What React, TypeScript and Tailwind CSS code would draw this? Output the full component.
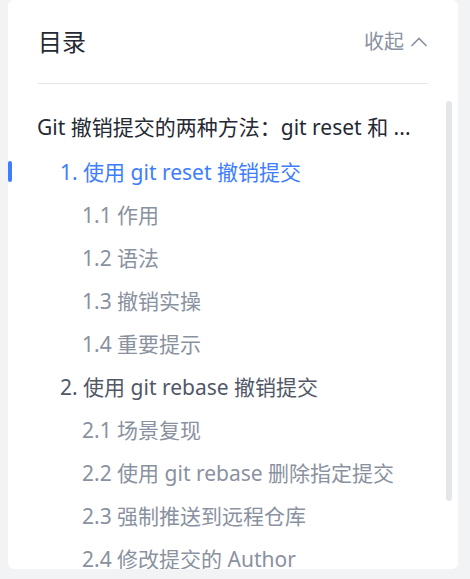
import React from 'react'

type Item = { text: string; level: 0 | 1 | 2; active?: boolean }

const items: Item[] = [
  { text: 'Git 撤销提交的两种方法：git reset 和 ...', level: 0 },
  { text: '1. 使用 git reset 撤销提交', level: 1, active: true },
  { text: '1.1 作用', level: 2 },
  { text: '1.2 语法', level: 2 },
  { text: '1.3 撤销实操', level: 2 },
  { text: '1.4 重要提示', level: 2 },
  { text: '2. 使用 git rebase 撤销提交', level: 1 },
  { text: '2.1 场景复现', level: 2 },
  { text: '2.2 使用 git rebase 删除指定提交', level: 2 },
  { text: '2.3 强制推送到远程仓库', level: 2 },
  { text: '2.4 修改提交的 Author', level: 2 },
]

function TocRow({ item, first }: { item: Item; first?: boolean }) {
  const indent = item.level === 0 ? 'pl-[29px]' : item.level === 1 ? 'pl-[52px]' : 'pl-[74px]'
  const color = item.active
    ? 'text-[#3d7dff]'
    : item.level === 0
      ? 'text-[#252933]'
      : item.level === 1
        ? 'text-[#515767]'
        : 'text-[#8a919f]'

  return (
    <div className={`relative flex h-[43px] shrink-0 items-center whitespace-nowrap ${indent} ${first ? 'mb-[2px]' : ''}`}>
      {item.active && <span className="absolute left-0 top-[11px] h-[21px] w-[4px] rounded-full bg-[#3d7dff]" />}
      <span className={`text-[21px] leading-[30px] ${color}`}>{item.text}</span>
    </div>
  )
}

export default function App() {
  return (
    <main
      className="h-[579px] w-[470px] overflow-hidden bg-[#f2f3f5]"
      style={{ fontFamily: '"Noto Sans", "Noto Sans CJK SC", sans-serif' }}
    >
      <div className="ml-[8px] flex h-[569px] w-[450px] flex-col overflow-hidden rounded-[6px] bg-white">
        <div className="mx-[30px] flex h-[84px] shrink-0 items-center justify-between border-b border-[#e4e6eb]">
          <h1 className="text-[24px] font-normal leading-[32px] text-[#252933]">目录</h1>
          <button className="flex items-center gap-[6px] text-[20px] leading-[28px] text-[#8a919f]">
            收起
            <svg width="18" height="10" viewBox="0 0 18 10" fill="none">
              <polyline points="1.5,9 9,1.5 16.5,9" stroke="#8a919f" strokeWidth="1.6" />
            </svg>
          </button>
        </div>

        <div className="relative flex flex-1 flex-col overflow-hidden pt-[21px]">
          {items.map((item, i) => (
            <TocRow key={i} item={item} first={i === 0} />
          ))}
          <div className="absolute right-[6px] top-[17px] h-[400px] w-[6px] rounded-full bg-[#e4e6eb]" />
        </div>
      </div>
    </main>
  )
}
